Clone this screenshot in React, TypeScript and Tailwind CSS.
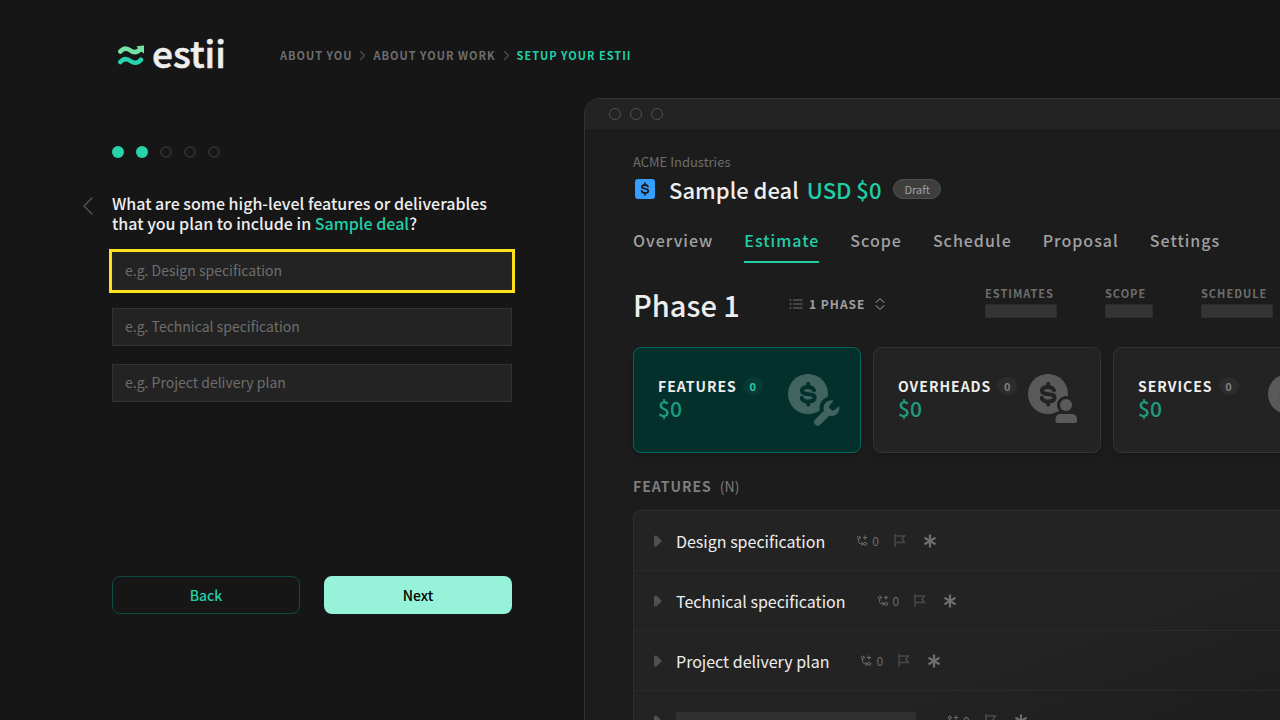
import React from "react";

type IconProps = { className?: string };

function LogoMark({ className }: IconProps) {
  return (
    <svg viewBox="0 0 28 22" className={className} fill="none" strokeWidth="4.600" strokeLinecap="round" aria-hidden="true">
      <path d="M3.300 6.500C6.500 2.800 10 2.800 13.500 5.500C16.500 7.900 20 8 24 3.500" stroke="#73e2a3" />
      <path d="M19.500 1.200L27 0.500V8.500C24.500 7 22 5 19.500 1.200Z" fill="#73e2a3" />
      <path d="M3.300 17C6.500 13.300 10 13.300 13.500 16C17 18.500 21 18.500 24 14.700" stroke="#26d3ae" />
    </svg>
  );
}

function Chevron({ className, left = false }: IconProps & { left?: boolean }) {
  return (
    <svg viewBox="0 0 10 18" className={className} fill="none" stroke="currentColor" strokeWidth="1.500" strokeLinecap="round" strokeLinejoin="round" aria-hidden="true">
      <path d={left ? "M9 1L1 9L9 17" : "M1 1L9 9L1 17"} vectorEffect="non-scaling-stroke" />
    </svg>
  );
}

const dollarPath =
  "M26 16.300C25 13.800 23 12.900 20 12.900C16.500 12.900 14 14.300 14 16.800C14 22 26.600 18.200 26.600 23.600C26.600 26.500 23.800 27.500 20.300 27.500C16.700 27.500 14.500 26.300 13.700 23.800M20.200 9.800V12.500M20.200 28V30.500";

function DollarToolIcon({ kind, cut }: { kind: "wrench" | "person"; cut: string }) {
  return (
    <svg viewBox="0 0 54 54" className="size-[54px] shrink-0" fill="none" aria-hidden="true">
      <circle cx="20" cy="20" r="20" fill="currentColor" />
      <path d={dollarPath} stroke={cut} strokeWidth="4" strokeLinecap="round" />
      {kind === "wrench" ? (
        <g>
          <circle cx="43" cy="34" r="11.500" fill={cut} />
          <path d="M30 47L39 38" stroke={cut} strokeWidth="12" strokeLinecap="round" />
          <path d="M29.800 48L40 37.800" stroke="currentColor" strokeWidth="7.400" strokeLinecap="round" />
          <path
            d="M45.500 26.500C41 25 35.800 28.300 35.500 33.500C35.500 38 38.500 42 43.500 42C48.500 42 52 37.500 51.300 32L46.300 36.200C45 37 43.800 36.800 42.800 35.800L41.600 34.400C40.700 33.300 40.900 32.200 41.800 31.200Z"
            fill="currentColor"
          />
        </g>
      ) : (
        <g>
          <circle cx="38" cy="31" r="9" fill={cut} />
          <path d="M25 51V45C25 40 27 37.500 32 37.500H44C49 37.500 51 40 51 45V51Z" fill={cut} />
          <circle cx="38" cy="31" r="6" fill="currentColor" />
          <path d="M27.500 45.500C27.500 42 29.500 40 33 40H43.500C47 40 49 42 49 45.500V47C49 48.200 48.200 49 47 49H29.500C28.300 49 27.500 48.200 27.500 47Z" fill="currentColor" />
        </g>
      )}
    </svg>
  );
}

function DealIcon() {
  return (
    <svg viewBox="0 0 20 20" className="size-5 shrink-0" fill="none" aria-hidden="true">
      <rect width="20" height="20" rx="3" fill="#369eff" />
      <path d="M13 7.700C12.600 6.500 11.500 6 10 6C8.300 6 7 6.700 7 7.900C7 10.500 13.200 8.800 13.200 11.900C13.200 13.300 11.800 14 10 14C8.200 14 7 13.300 6.700 12M10 4.200V6M10 14V15.800" stroke="#1c1c1c" strokeWidth="1.800" strokeLinecap="round" />
    </svg>
  );
}

function ListIcon() {
  return (
    <svg viewBox="0 0 14 12" className="h-3 w-3.5" stroke="currentColor" fill="none" aria-hidden="true">
      <path d="M4 2H13.500M4 6H13.500M4 10H13.500" strokeWidth="1.200" />
      <path d="M0.800 2H2.200M0.800 6H2.200M0.800 10H2.200" strokeWidth="1.400" />
    </svg>
  );
}

function SortIcon() {
  return (
    <svg viewBox="0 0 10 12" className="h-3 w-2.5" stroke="currentColor" fill="none" strokeWidth="1.200" strokeLinecap="round" strokeLinejoin="round" aria-hidden="true">
      <path d="M1 4.300L5 0.700L9 4.300M1 7.700L5 11.300L9 7.700" />
    </svg>
  );
}

function LinkIcon() {
  return (
    <svg viewBox="0 0 12 12" className="size-3" stroke="currentColor" fill="none" strokeLinecap="round" aria-hidden="true">
      <circle cx="2.800" cy="2.600" r="1.500" />
      <circle cx="9.200" cy="8.800" r="1.500" />
      <path d="M2.600 4.500V6.300C2.600 8 3.600 8.800 5 8.800H7.400M5.700 7.200L7.400 8.800L5.700 10.400M9 0.800V4.400M7.200 2.600H10.800" />
    </svg>
  );
}

function FlagIcon() {
  return (
    <svg viewBox="0 0 12 13" className="h-[13px] w-3" stroke="currentColor" fill="none" strokeWidth="1.500" aria-hidden="true">
      <path d="M1 0V13M1 2H10.500L8 5.200L10.500 8.500H1" />
    </svg>
  );
}

function AsteriskIcon() {
  return (
    <svg viewBox="0 0 12 14" className="h-3.5 w-3" stroke="currentColor" fill="none" strokeWidth="2.200" aria-hidden="true">
      <path d="M6 0.500V13.500M0.500 3.700L11.500 10.300M11.500 3.700L0.500 10.300" />
    </svg>
  );
}

function RowArrow() {
  return (
    <svg viewBox="0 0 8 12" className="h-3 w-2 text-[#505050]" fill="currentColor" aria-hidden="true">
      <path d="M0 2C0 0.500 1.500 0 2.800 1L7.300 5.200C7.800 5.700 7.800 6.300 7.300 6.800L2.800 11C1.500 12 0 11.500 0 10Z" />
    </svg>
  );
}

const steps = ["About you", "About your work", "Setup your Estii"];
const tabs = ["Overview", "Estimate", "Scope", "Schedule", "Proposal", "Settings"];
const placeholders = ["e.g. Design specification", "e.g. Technical specification", "e.g. Project delivery plan"];
const rows = ["Design specification", "Technical specification", "Project delivery plan", ""];

function Header() {
  return (
    <header className="flex h-[98px] shrink-0 items-center pt-3 pl-[117px]">
      <a href="#" className="flex w-[163px] items-center gap-[7px]">
        <LogoMark className="mt-0.5 h-[22px] w-7" />
        <span className="mb-1.5 text-[37px] leading-8 font-medium text-[#eeeeee] [-webkit-text-stroke:0.6px_#eeeeee]">estii</span>
      </a>
      <nav aria-label="Setup steps" className="text-[11px] leading-4 font-bold tracking-[1px] uppercase">
        <ol className="flex items-center gap-2">
          {steps.map((s, i) => (
            <li key={s} className={i === 2 ? "flex items-center gap-2 text-[#20cfa8]" : "flex items-center gap-2 text-[#6e6e6e]"}>
              {s}
              {i < 2 && <Chevron className="h-[9px] w-[5px] overflow-visible text-[#484848]" />}
            </li>
          ))}
        </ol>
      </nav>
    </header>
  );
}

function SetupForm() {
  return (
    <section className="flex w-[584px] shrink-0 flex-col pt-12 pr-[72px] pl-[112px]">
      <div className="flex gap-3" role="img" aria-label="Step 2 of 5">
        {[0, 1, 2, 3, 4].map((n) => (
          <span key={n} className={n < 2 ? "size-3 rounded-full bg-[#28d2aa]" : "size-3 rounded-full border-2 border-[#2e2e2e]"} />
        ))}
      </div>
      <div className="mt-[35px] -ml-[29px] flex gap-[19px]">
        <button type="button" aria-label="Previous" className="mt-1 h-[18px] w-2.5 text-[#505050]">
          <Chevron left className="h-[18px] w-2.5" />
        </button>
        <h1 className="text-base leading-5 font-medium text-[#eeeeee]">
          What are some high-level features or deliverables
          <br />
          that you plan to include in <span className="text-[#20cfa8]">Sample deal</span>?
        </h1>
      </div>
      <div className="mt-[19px] flex flex-col gap-[18px]">
        {placeholders.map((p, i) => (
          <input
            key={p}
            type="text"
            aria-label={`Feature ${i + 1}`}
            placeholder={p}
            className={
              i === 0
                ? "h-[38px] w-full border border-[#282828] bg-[#232323] px-3 pb-0.5 text-[14px] text-[#eeeeee] outline-3 outline-[#ffe01c] placeholder:text-[#6e6e6e]"
                : "h-[38px] w-full border border-[#343434] bg-[#232323] px-3 pb-0.5 text-[14px] text-[#eeeeee] placeholder:text-[#6e6e6e]"
            }
          />
        ))}
      </div>
      <div className="mt-[174px] grid grid-cols-2 gap-6 text-[14px] leading-5 font-medium">
        <button type="button" className="h-[38px] rounded-lg border border-[#0b4b44] text-[#20cfa8]">Back</button>
        <button type="button" className="h-[38px] rounded-lg bg-[#96f3da] text-black">Next</button>
      </div>
    </section>
  );
}

function SummaryCard({ title, kind, active = false }: { title: string; kind: "wrench" | "person"; active?: boolean }) {
  return (
    <article
      className={
        active
          ? "flex h-[106px] w-[228px] shrink-0 justify-between rounded-lg border border-[#04675a] bg-[#04302c] pt-[26px] pr-[18px] pl-6 shadow-md"
          : "flex h-[106px] w-[228px] shrink-0 justify-between rounded-lg border border-[#343434] bg-[#232323] pt-[26px] pr-[18px] pl-6 shadow-md"
      }
    >
      <div className="pt-[3px]">
        <h3 className="flex items-center gap-1.5 text-[14px] leading-[18px] font-bold tracking-[1px] text-[#eeeeee] uppercase">
          {title}
          <span className={active ? "flex h-[18px] w-5 items-center justify-center rounded-full bg-[#063a35] text-[11px] tracking-normal text-[#20cfa8]" : "flex h-[18px] w-5 items-center justify-center rounded-full bg-[#2c2c2c] text-[11px] tracking-normal text-[#808080]"}>0</span>
        </h3>
        <p className="text-[21px] leading-[26px] font-medium text-[#1c9c80]">$0</p>
      </div>
      <div className={active ? "w-[54px] shrink-0 text-[#426461]" : "w-[54px] shrink-0 text-[#5a5a5a]"}>
        <DollarToolIcon kind={kind} cut={active ? "#04302c" : "#232323"} />
      </div>
    </article>
  );
}

function Metric({ label, wide = false }: { label: string; wide?: boolean }) {
  return (
    <div className="shrink-0">
      <div className="text-[11px] leading-[14px] font-bold tracking-[1px] text-[#6e6e6e] uppercase">{label}</div>
      <div className={wide ? "mt-1 h-3.5 w-[72px] border border-[#2c2c2c] bg-[#343434]" : "mt-1 h-3.5 w-12 border border-[#2c2c2c] bg-[#343434]"} />
    </div>
  );
}

function Preview() {
  return (
    <section className="flex min-w-0 flex-1 flex-col overflow-hidden rounded-tl-2xl border-t border-l border-[#343434] bg-[#1c1c1c]">
      <div className="flex h-[30px] shrink-0 items-center gap-[9px] bg-[#232323] pl-6">
        {[0, 1, 2].map((n) => (
          <span key={n} className="size-3 rounded-full border border-[#505050]" />
        ))}
      </div>
      <div className="pt-6 pl-12 whitespace-nowrap">
        <p className="text-[13px] leading-[18px] text-[#6e6e6e]">ACME Industries</p>
        <div className="mt-0.5 flex h-8 items-center pl-0.5">
          <DealIcon />
          <h2 className="ml-3.5 text-[22px] leading-8 font-medium text-[#eeeeee]">Sample deal</h2>
          <span className="ml-2 text-[22px] leading-8 font-medium text-[#20cfa8]">USD $0</span>
          <span className="ml-3 rounded-full border border-[#505050] bg-[#3e3e3e] px-2.5 text-[11px] leading-[18px] text-[#a0a0a0]">Draft</span>
        </div>
        <nav aria-label="Deal" className="mt-[25px] flex gap-[31px] text-base leading-5 font-medium tracking-[1px]">
          {tabs.map((t) => (
            <a key={t} href="#" className={t === "Estimate" ? "border-b-2 border-[#20cfa8] pb-[11px] text-[#20cfa8]" : "pb-[13px] text-[#a0a0a0]"}>
              {t}
            </a>
          ))}
        </nav>
        <div className="mt-[21px] flex h-10 items-center">
          <h2 className="w-[156px] text-[29px] leading-10 font-medium text-[#eeeeee]">Phase 1</h2>
          <button type="button" className="flex w-[196px] items-center gap-1.5 text-[12px] leading-4 font-bold tracking-[1px] text-[#a0a0a0]">
            <span className="text-[#6e6e6e]"><ListIcon /></span>
            1 PHASE
            <span className="ml-1 text-[#6e6e6e]"><SortIcon /></span>
          </button>
          <div className="flex gap-12 pb-1">
            <Metric label="Estimates" wide />
            <Metric label="Scope" />
            <Metric label="Schedule" wide />
          </div>
        </div>
        <div className="mt-[23px] flex gap-3">
          <SummaryCard title="Features" kind="wrench" active />
          <SummaryCard title="Overheads" kind="person" />
          <SummaryCard title="Services" kind="person" />
        </div>
        <h3 className="mt-[23px] flex gap-2 text-[14px] leading-5 font-bold tracking-[1px] text-[#7e7e7e]">
          FEATURES <span className="font-normal tracking-normal">(N)</span>
        </h3>
        <ul className="mt-3.5 rounded-tl-lg border-t border-l border-[#2e2e2e] bg-linear-to-br from-[#232323] from-60% to-[#1c1c1c]">
          {rows.map((r, i) => (
            <li key={i} className="flex h-[60px] items-center border-b border-[#2a2a2a] pl-5">
              <RowArrow />
              {r ? (
                <span className="ml-3.5 text-base leading-6 text-[#eeeeee]">{r}</span>
              ) : (
                <span className="ml-3.5 h-[18px] w-60 bg-[#303030]" />
              )}
              <span className="ml-[31px] flex items-center gap-1 text-[12px] leading-4 text-[#6e6e6e]">
                <LinkIcon />0
              </span>
              <span className="ml-[15px] text-[#484848]"><FlagIcon /></span>
              <span className="ml-[18px] text-[#6e6e6e]"><AsteriskIcon /></span>
            </li>
          ))}
        </ul>
      </div>
    </section>
  );
}

export default function App() {
  return (
    <div className="flex h-screen flex-col overflow-hidden bg-[#161616] font-['Noto_Sans_CJK_SC','Noto_Sans',sans-serif]">
      <Header />
      <main className="flex min-h-0 flex-1">
        <SetupForm />
        <Preview />
      </main>
    </div>
  );
}
